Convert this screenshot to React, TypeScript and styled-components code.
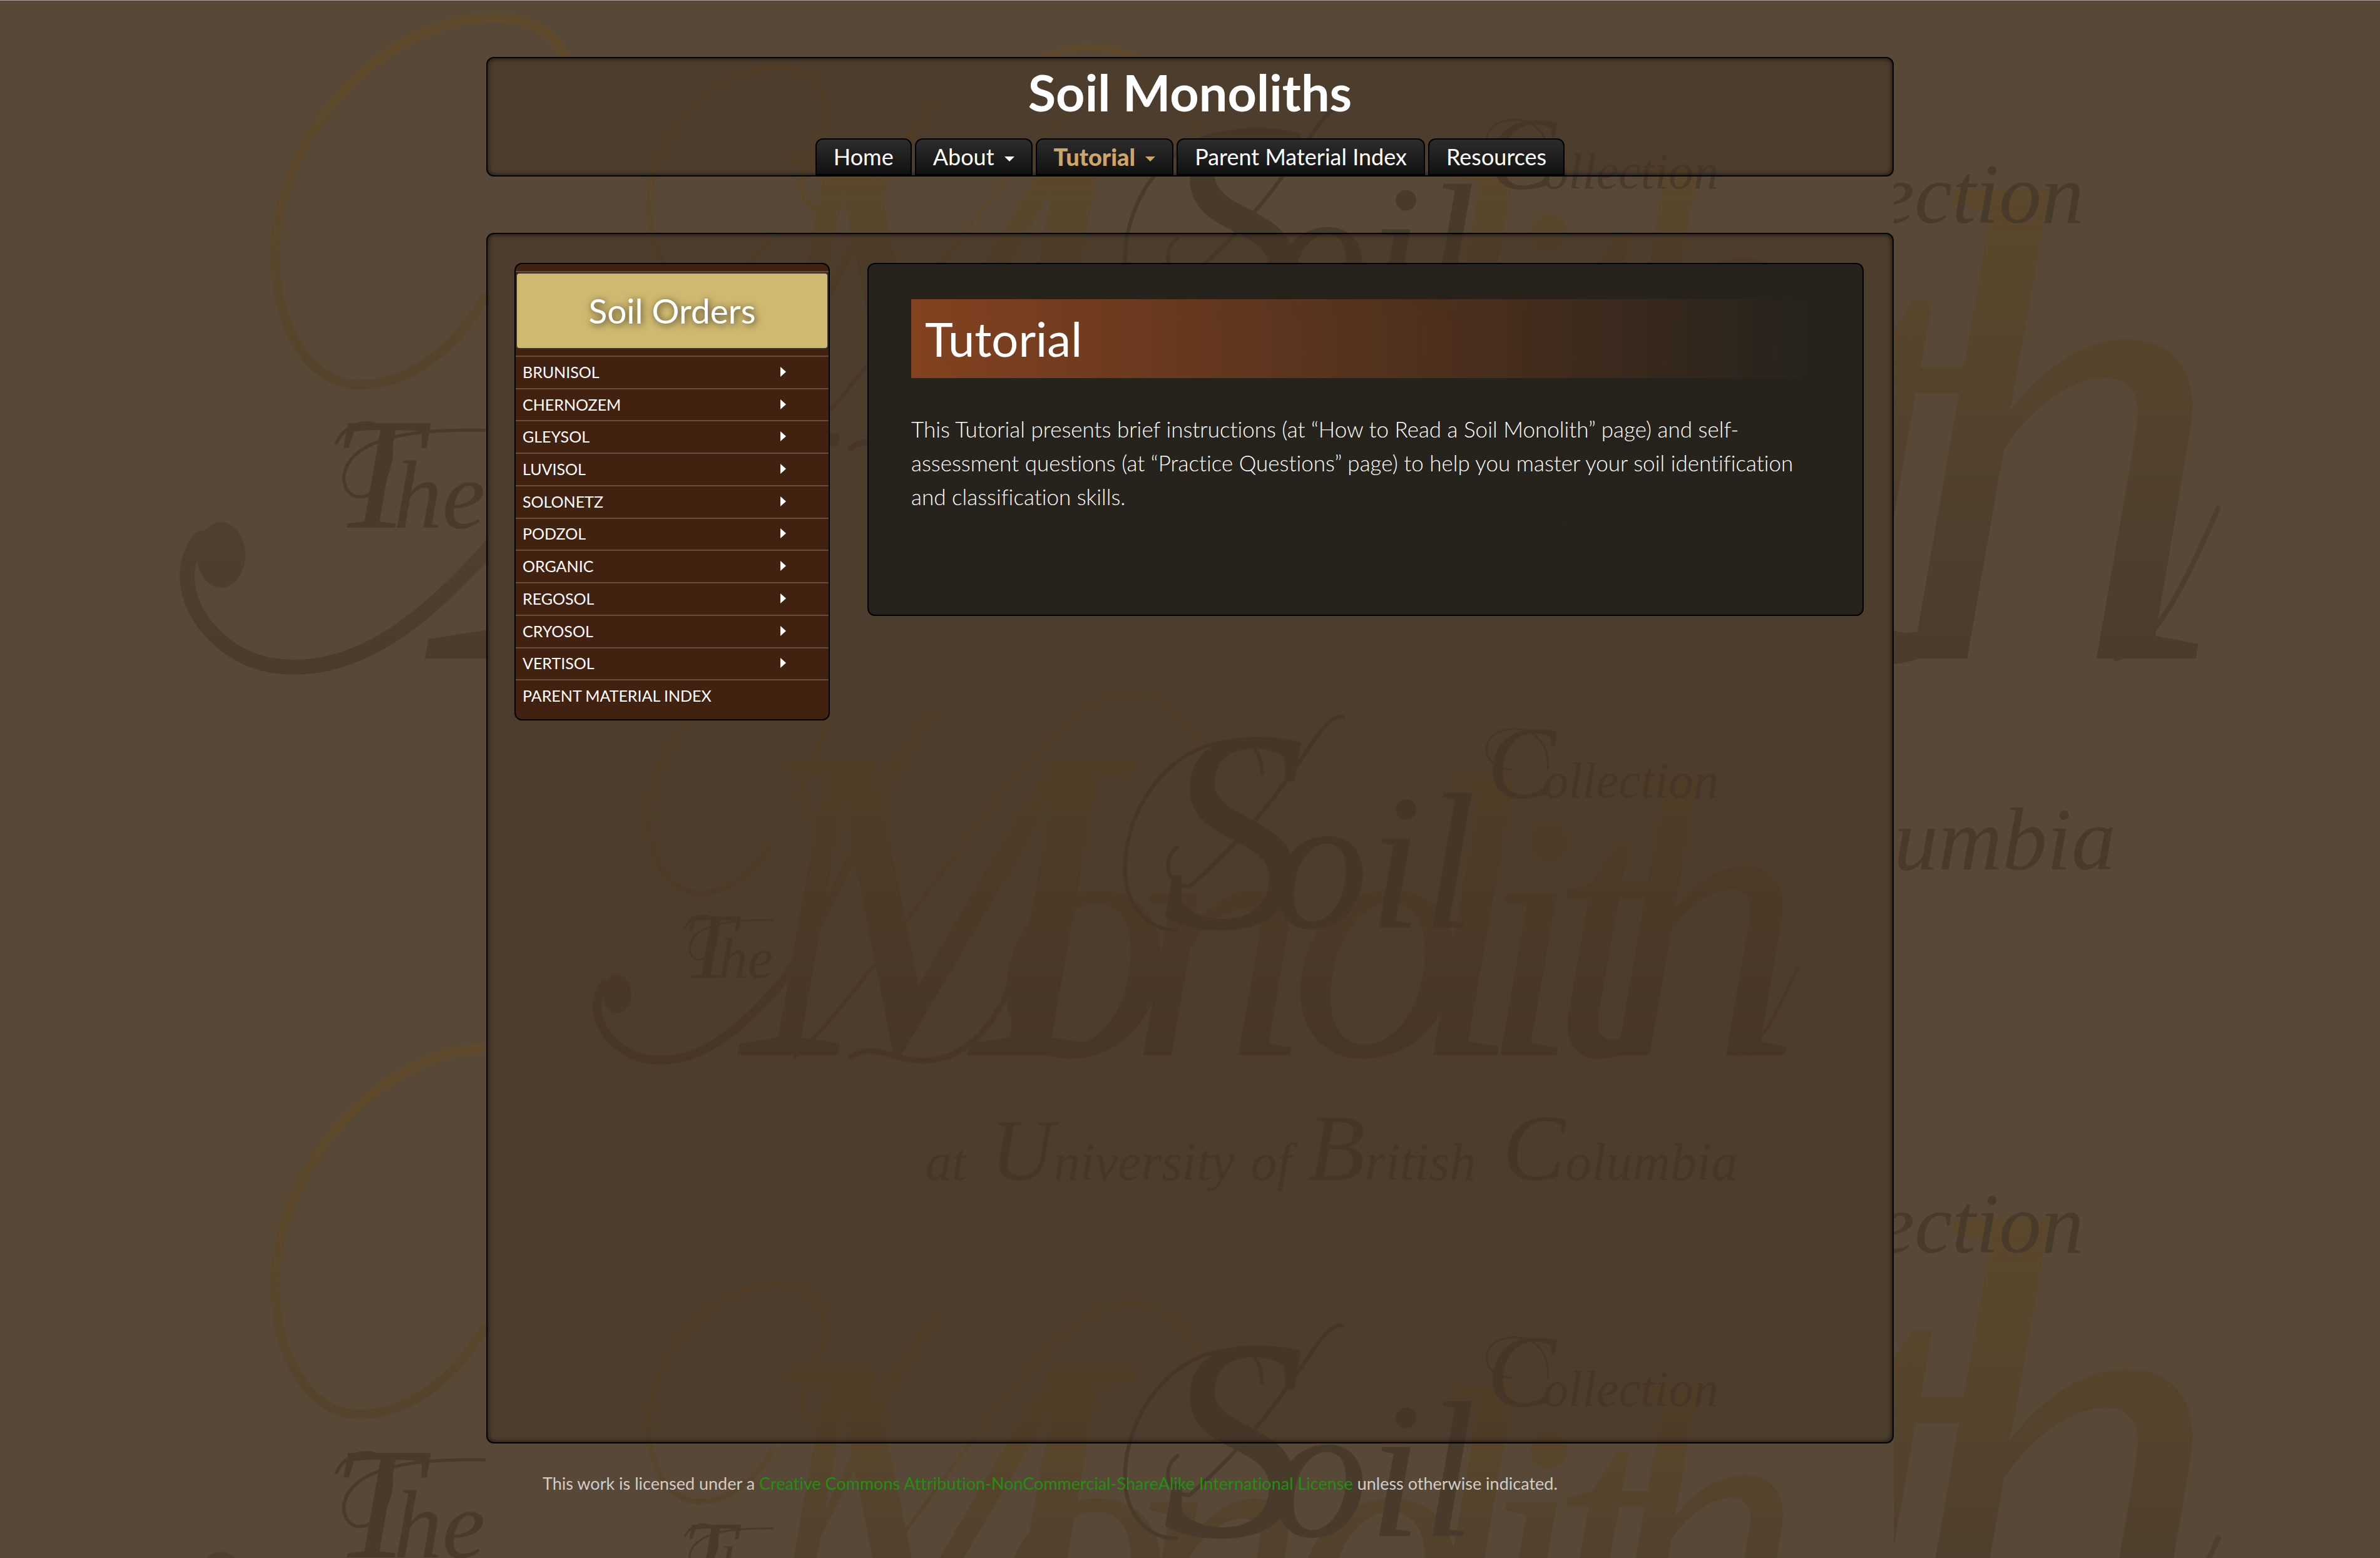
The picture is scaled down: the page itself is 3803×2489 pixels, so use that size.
import React from "react";
import styled, { createGlobalStyle, css } from "styled-components";

const GlobalStyle = createGlobalStyle`
  *, *::before, *::after { box-sizing: border-box; }
  body {
    margin: 0;
    background: #574837;
    color: #fff;
    font-family: Lato, "Open Sans", sans-serif;
    font-variant-ligatures: no-common-ligatures;
  }
  a { color: inherit; text-decoration: none; }
  h1, h2, p, ul { margin: 0; padding: 0; }
  ul { list-style: none; }
`;

const Shell = styled.div`
  position: relative;
  isolation: isolate;
  overflow: hidden;
  display: flex;
  flex-direction: column;
  align-items: center;
  min-height: 100vh;
  padding-top: 90px;
  border-top: 1px solid #aaa39b;
`;

const Container = styled.div`
  position: relative;
  isolation: isolate;
  overflow: hidden;
  flex: 1;
  display: flex;
  flex-direction: column;
  width: 100%;
  max-width: 2249px;
  background: #574837;
`;

const TileLayer = styled.div`
  position: absolute;
  inset: 0;
  z-index: -1;
  overflow: hidden;
  pointer-events: none;
`;

const Tile = styled.svg`
  display: block;
  width: 100%;
`;

const Definitions = styled.svg`
  position: absolute;
  width: 0;
  height: 0;
`;

const panel = css`
  border: 2px solid #000;
  border-radius: 12px;
`;

const wash = css`
  background: rgba(67, 50, 35, 0.5);
  box-shadow: inset 0 0 8px rgba(0, 0, 0, 0.75);
`;

const Header = styled.header`
  ${panel}
  ${wash}
  display: flex;
  flex-direction: column;
  align-items: center;
  justify-content: space-between;
  height: 191px;
  margin-bottom: 90px;
`;

const SiteTitle = styled.h1`
  padding-top: 4px;
  font-size: 81px;
  line-height: 100px;
  font-weight: 700;
`;

const Tabs = styled.ul`
  display: flex;
  gap: 5px;
`;

const Tab = styled.a<{ $active?: boolean }>`
  display: flex;
  align-items: center;
  gap: 16px;
  height: 59px;
  padding: 0 27px 2px;
  border: 2px solid #000;
  border-radius: 12px 12px 0 0;
  background: linear-gradient(#2c2c2c, #111);
  color: ${(p) => (p.$active ? "#cfa467" : "#fff")};
  font-size: ${(p) => (p.$active ? "38px" : "36px")};
  line-height: 44px;
  font-weight: ${(p) => (p.$active ? 900 : 400)};
`;

const Caret = styled.span<{ $side?: boolean }>`
  width: 0;
  height: 0;
  ${(p) =>
    p.$side
      ? css`
          border-block: 8px solid transparent;
          border-left: 9px solid currentColor;
        `
      : css`
          margin-top: 8px;
          border-inline: 8px solid transparent;
          border-top: 8px solid currentColor;
        `}
`;

const Main = styled.div`
  ${panel}
  ${wash}
  flex: 1;
  display: flex;
  align-items: flex-start;
  gap: 60px;
  padding: 46px 46px 46px 43px;
`;

const Sidebar = styled.nav`
  ${panel}
  flex: none;
  width: 504px;
  padding: 11px 0 12px;
  background: #412110;
`;

const SidebarHead = styled.div`
  padding-bottom: 10px;
  border-top: 2px solid #674c3c;
`;

const SidebarTitle = styled.h2`
  border: 2px solid #33332f;
  border-radius: 6px;
  background: #cfb970;
  font-size: 55px;
  line-height: 119px;
  font-weight: 400;
  text-align: center;
  text-shadow: 2px 2px 12px rgba(0, 0, 0, 0.7);
`;

const Orders = styled.ul`
  display: grid;
  grid-auto-rows: 1fr;
  min-height: 569px;
`;

const OrderLink = styled.a`
  display: flex;
  align-items: center;
  justify-content: space-between;
  height: 100%;
  padding: 0 68px 2px 11px;
  border-top: 2px solid #674c3c;
  font-size: 25px;
  line-height: 32px;
  text-transform: uppercase;
`;

const Article = styled.main`
  ${panel}
  flex: 1;
  min-height: 564px;
  padding: 56px 68px;
  background: rgba(32, 30, 26, 0.85);
`;

const ArticleTitle = styled.h1`
  margin-bottom: 54px;
  padding: 18px 22px;
  background: linear-gradient(90deg, #834220, rgba(131, 66, 32, 0));
  font-size: 76px;
  line-height: 90px;
  font-weight: 400;
`;

const Lead = styled.p`
  font-size: 35px;
  line-height: 54px;
  font-weight: 300;
`;

const Footer = styled.footer`
  padding: 44px 90px 99px;
  color: #d2ccc5;
  font-size: 27px;
  line-height: 40px;
`;

const License = styled.a`
  color: #258e12;
`;

const TILE_BOX = "0 0 2250 973";

function WatermarkDefs() {
  const ink = "#483b2c";
  return (
    <Definitions aria-hidden="true">
      <defs>
        <linearGradient id="ochre" gradientUnits="userSpaceOnUse" x1="0" y1="0" x2="0" y2="640">
          <stop offset="0" stopColor="#5f4a2a" />
          <stop offset="0.4" stopColor="#59472c" />
          <stop offset="0.8" stopColor="#4e3f2e" />
          <stop offset="1" stopColor="#4a3b2d" />
        </linearGradient>
        <symbol id="tile" viewBox={TILE_BOX}>
          <g fontFamily='"Liberation Serif", serif' fontStyle="italic">
            <g fill="url(#ochre)">
              <text y="622" fontSize="560">
                <tspan x="410" fontSize="720">M</tspan>
                <tspan x="815">o</tspan>
                <tspan x="1030">n</tspan>
                <tspan x="1285">o</tspan>
                <tspan x="1480" fontSize="640">l</tspan>
                <tspan x="1590">i</tspan>
                <tspan x="1700" fontSize="600">t</tspan>
                <tspan x="1785" fontSize="640">h</tspan>
              </text>
            </g>
            <g fill="none" stroke="url(#ochre)" strokeLinecap="round">
              <path strokeWidth="9" d="M458 281C430 330 385 363 341 363C290 363 260 305 260 240C260 130 360 16 468 16C520 16 541 50 541 89C541 130 503 170 503 202C503 228 520 244 542 244C610 244 660 120 727 72" />
              <path strokeWidth="14" d="M190 508C170 530 172 570 203 600C225 622 250 630 278 630C350 630 410 575 459 521C540 430 620 200 712 77" />
              <path strokeWidth="6" d="M493 625C630 500 830 150 945 80C980 55 1000 44 1028 44C1110 44 1160 130 1154 238" />
              <path strokeWidth="9" d="M582 625C620 600 650 631 699 631C760 631 810 580 836 513" />
              <path strokeWidth="5" d="M2001 622C2040 610 2070 540 2097 480" />
            </g>
            <ellipse cx="209" cy="524" rx="23" ry="31" fill="url(#ochre)" />
            <g fill={ink}>
              <text x="1080" y="418" fontSize="460">
                S<tspan x="1255" fontSize="310">oil</tspan>
              </text>
              <text x="1600" y="210" fontSize="165">
                C<tspan x="1690" fontSize="80">ollection</tspan>
              </text>
              <text x="315" y="498" fontSize="150">
                T<tspan x="372" fontSize="92">he</tspan>
              </text>
              <text y="821" fontSize="84">
                <tspan x="702">at</tspan>
                <tspan x="806" fontSize="140">U</tspan>
                <tspan>niversity</tspan>
                <tspan x="1222">of</tspan>
                <tspan x="1313" fontSize="150">B</tspan>
                <tspan>ritish</tspan>
                <tspan x="1625" fontSize="150">C</tspan>
                <tspan>olumbia</tspan>
              </text>
            </g>
            <g fill="none" stroke={ink} strokeWidth="6" strokeLinecap="round">
              <path d="M1370 82C1330 70 1300 200 1124 353C1085 350 1080 307 1105 290M1240 172C1240 140 1225 120 1199 120C1100 120 1021 220 1021 325C1021 380 1055 422 1103 422" />
              <path strokeWidth="3" d="M1697 165C1700 110 1660 95 1630 102C1585 110 1590 165 1640 165M318 418C330 392 372 390 370 430C365 475 325 480 325 450C330 410 400 405 458 406" />
            </g>
          </g>
        </symbol>
      </defs>
    </Definitions>
  );
}

function Watermark({ count }: { count: number }) {
  return (
    <TileLayer aria-hidden="true">
      {Array.from({ length: count }, (_, i) => (
        <Tile key={i} viewBox={TILE_BOX}>
          <use href="#tile" width="2250" height="973" />
        </Tile>
      ))}
    </TileLayer>
  );
}

const tabs = [
  { label: "Home" },
  { label: "About", menu: true },
  { label: "Tutorial", menu: true, active: true },
  { label: "Parent Material Index" },
  { label: "Resources" },
];

const orders = [
  "Brunisol",
  "Chernozem",
  "Gleysol",
  "Luvisol",
  "Solonetz",
  "Podzol",
  "Organic",
  "Regosol",
  "Cryosol",
  "Vertisol",
];

export default function App() {
  return (
    <>
      <GlobalStyle />
      <WatermarkDefs />
      <Shell>
        <Watermark count={2} />
        <Container>
          <Watermark count={3} />
          <Header>
            <SiteTitle>Soil Monoliths</SiteTitle>
            <nav>
              <Tabs>
                {tabs.map((tab) => (
                  <li key={tab.label}>
                    <Tab href="#" $active={tab.active}>
                      {tab.label}
                      {tab.menu && <Caret />}
                    </Tab>
                  </li>
                ))}
              </Tabs>
            </nav>
          </Header>
          <Main>
            <Sidebar>
              <SidebarHead>
                <SidebarTitle>Soil Orders</SidebarTitle>
              </SidebarHead>
              <Orders>
                {orders.map((name) => (
                  <li key={name}>
                    <OrderLink href="#">
                      {name}
                      <Caret $side />
                    </OrderLink>
                  </li>
                ))}
                <li>
                  <OrderLink href="#">Parent Material Index</OrderLink>
                </li>
              </Orders>
            </Sidebar>
            <Article>
              <ArticleTitle>Tutorial</ArticleTitle>
              <Lead>
                This Tutorial presents brief instructions (at “How to Read a Soil Monolith” page) and
                self-assessment questions (at “Practice Questions” page) to help you master your soil
                identification and classification skills.
              </Lead>
            </Article>
          </Main>
          <Footer>
            This work is licensed under a{" "}
            <License href="#">
              Creative Commons Attribution-NonCommercial-ShareAlike International License
            </License>{" "}
            unless otherwise indicated.
          </Footer>
        </Container>
      </Shell>
    </>
  );
}
